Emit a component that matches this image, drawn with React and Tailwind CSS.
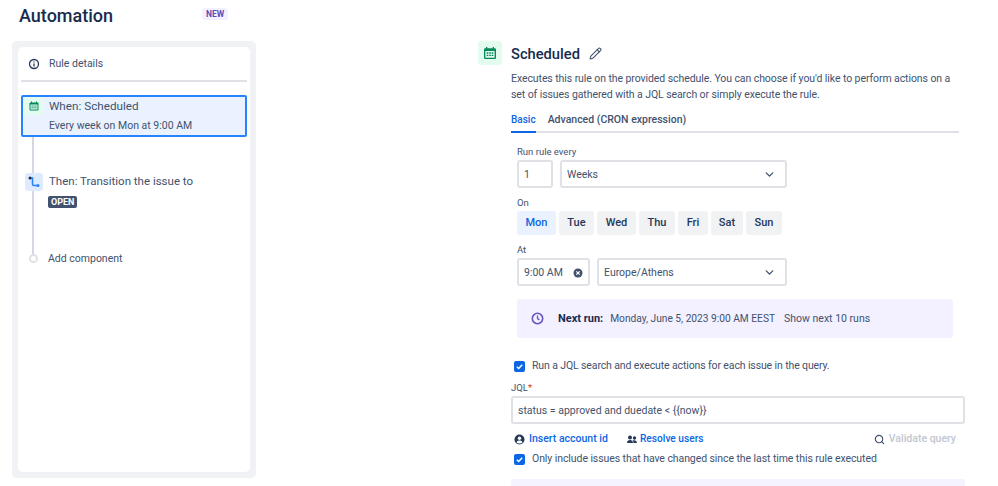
import React from 'react';
import { ChevronDown, Pencil, Search } from 'lucide-react';

const CalendarIcon = ({ size = 16 }) => (
  <svg width={size} height={size} viewBox="0 0 24 24">
    <path d="M6 3h2v2h8V3h2v2h1a2 2 0 0 1 2 2v12a2 2 0 0 1-2 2H5a2 2 0 0 1-2-2V7a2 2 0 0 1 2-2h1V3zM5 9v10h14V9H5z" fill="#00875a" />
    <path d="M7 11h2.5v2H7zM10.75 11h2.5v2h-2.5zM14.5 11H17v2h-2.5zM7 14.5h2.5v2H7zM10.75 14.5h2.5v2h-2.5zM14.5 14.5H17v2h-2.5z" fill="#00875a" />
  </svg>
);

const CheckBox = () => (
  <span className="flex h-[11px] w-[11px] shrink-0 items-center justify-center rounded-[2px] bg-[#0c66e4]">
    <svg width="9" height="9" viewBox="0 0 10 10" fill="none">
      <path d="M2 5.2l2.1 2.1L8 3" stroke="#fff" strokeWidth="1.6" />
    </svg>
  </span>
);

const Field = ({ className, children }) => (
  <div className={`flex h-[28px] items-center rounded-[3px] border-2 border-[#dfe1e6] bg-white px-[5px] pt-[1px] text-[#42526e] ${className}`}>
    {children}
  </div>
);

const days = [
  ['Mon', 'w-[39px]'],
  ['Tue', 'w-[35px]'],
  ['Wed', 'w-[39px]'],
  ['Thu', 'w-[36px]'],
  ['Fri', 'w-[30px]'],
  ['Sat', 'w-[32px]'],
  ['Sun', 'w-[36px]'],
];

const App = () => {
  return (
    <div className="flex h-[486px] w-[998px] overflow-hidden bg-white font-['Roboto',sans-serif] text-[10.5px] text-[#42526e]">
      <div className="ml-[12px] w-[244px] shrink-0">
        <div className="flex h-[41px] items-start">
          <h1 className="ml-[7px] mt-[3px] text-[18px] leading-[26px] font-medium text-[#172b4d]">Automation</h1>
          <span className="ml-[89px] mt-[8px] rounded-[3px] bg-[#f3f0ff] px-[4px] text-[8.5px] leading-[12px] font-bold text-[#5e4db2]">NEW</span>
        </div>
        <div className="h-[437px] rounded-[5px] bg-[#f1f2f5] p-[6px]">
          <div className="h-full rounded-[5px] bg-white px-[3px]">
            <div className="flex h-[35px] items-center border-b-2 border-[#dfe1e6] pl-[7px]">
              <svg width="12" height="12" viewBox="0 0 12 12" fill="none">
                <circle cx="6" cy="6" r="4.5" stroke="#253858" strokeWidth="1.3" />
                <path d="M6 5.4v3M6 3.4v1" stroke="#253858" strokeWidth="1.3" />
              </svg>
              <span className="ml-[9px] pt-[1px]">Rule details</span>
            </div>
            <div className="mt-[13px] h-[42px] rounded-[2px] border-2 border-[#2684ff] bg-[#e9f2fe] pl-[1px]">
              <div className="flex">
                <span className="flex h-[18px] w-[20px] items-center justify-center rounded-[3px] bg-[#e3fcef]">
                  <CalendarIcon size={12} />
                </span>
                <div className="ml-[5px] -mt-[1px]">
                  <div className="text-[11.7px] leading-[20px]">When: Scheduled</div>
                  <div className="mt-[2px] leading-[15px]">Every week on Mon at 9:00 AM</div>
                </div>
              </div>
            </div>
            <div className="relative h-[126px]">
              <span className="absolute left-[11px] top-0 h-[120px] w-[2px] bg-[#d5d8e0]" />
              <span className="absolute left-[4px] top-[36px] flex h-[18px] w-[18px] items-center justify-center rounded-[3px] bg-[#deebff]">
                <svg width="14" height="14" viewBox="0 0 14 14" fill="none">
                  <path d="M3 3h2.500v6c0 1 .5 1.500 1.500 1.500h3" stroke="#2684ff" strokeWidth="1.600" />
                  <circle cx="3" cy="3" r="1.500" fill="#172b4d" />
                  <circle cx="11" cy="10.500" r="1.500" fill="#2684ff" />
                </svg>
              </span>
              <div className="absolute left-[28px] top-[34px]">
                <div className="whitespace-nowrap text-[11.5px] leading-[20px]">Then: Transition the issue to</div>
                <span className="-ml-[1px] mt-[5px] block w-fit rounded-[2px] bg-[#42526e] px-[3px] text-[9px] leading-[12px] font-bold text-white">OPEN</span>
              </div>
              <span className="absolute left-[8px] top-[117px] h-[9px] w-[9px] rounded-full border-2 border-[#dfe1e6] bg-white" />
              <span className="absolute left-[27px] top-[114px] leading-[16px]">Add component</span>
            </div>
          </div>
        </div>
      </div>

      <div className="ml-[222px] w-[487px] shrink-0">
        <div className="mt-[41px] flex">
          <span className="flex h-[24px] w-[24px] items-center justify-center rounded-[3px] bg-[#e3fcef]">
            <CalendarIcon />
          </span>
          <h2 className="ml-[9px] text-[14.7px] leading-[26px] font-medium text-[#172b4d]">Scheduled</h2>
          <Pencil className="ml-[9px] mt-[6px]" size={13} color="#42526e" />
        </div>
        <div className="ml-[33px]">
          <p className="mt-[4px] w-[448px] leading-[16px] tracking-[-0.08px]">
            Executes this rule on the provided schedule. You can choose if you'd like to perform actions on a set of issues gathered with a JQL search or simply execute the rule.
          </p>
          <div className="mt-[7px] flex h-[23px] w-[448px] border-b-2 border-[#dfe1e6] leading-[19px]">
            <span className="-mb-[2px] border-b-2 border-[#0c66e4] text-[10px] font-medium text-[#0c66e4]">Basic</span>
            <span className="ml-[12px] font-medium">Advanced (CRON expression)</span>
          </div>
          <div className="ml-[6px] w-[436px]">
            <label className="mt-[12px] block text-[9.5px] leading-[14px]">Run rule every</label>
            <div className="mt-[1px] flex gap-[7px]">
              <Field className="w-[36px]">1</Field>
              <Field className="w-[227px] justify-between">
                Weeks
                <ChevronDown size={13} className="mr-[4px]" strokeWidth={2.5} />
              </Field>
            </div>
            <label className="mt-[8px] block text-[9.5px] leading-[14px]">On</label>
            <div className="mt-[1px] flex gap-[3px]">
              {days.map(([day, width], i) => (
                <span
                  key={day}
                  className={`flex h-[24px] items-center justify-center rounded-[3px] text-[11px] font-medium ${width} ${i === 0 ? 'bg-[#e9f2fe] text-[#0c66e4]' : 'bg-[#f1f2f4] text-[#253858]'}`}
                >
                  {day}
                </span>
              ))}
            </div>
            <label className="mt-[8px] block text-[9.5px] leading-[14px]">At</label>
            <div className="mt-[1px] flex gap-[7px]">
              <Field className="w-[73px] justify-between">
                9:00 AM
                <svg width="10" height="10" viewBox="0 0 10 10">
                  <circle cx="5" cy="5" r="4.500" fill="#42526e" />
                  <path d="M3.300 3.300l3.400 3.400M6.700 3.300L3.300 6.700" stroke="#fff" strokeWidth="1.200" />
                </svg>
              </Field>
              <Field className="w-[190px] justify-between">
                Europe/Athens
                <ChevronDown size={13} className="mr-[4px]" strokeWidth={2.5} />
              </Field>
            </div>
            <div className="mt-[13px] flex h-[39px] items-center rounded-[3px] bg-[#f3f0ff] pl-[14px]">
              <svg width="13" height="13" viewBox="0 0 13 13" fill="none">
                <circle cx="6.500" cy="6.500" r="5.200" stroke="#6554c0" strokeWidth="1.600" />
                <path d="M6.500 3.600v3l2 1.400" stroke="#6554c0" strokeWidth="1.300" />
              </svg>
              <span className="ml-[14px] pt-[1px] text-[11px] font-bold text-[#172b4d]">Next run:</span>
              <span className="ml-[7px] pt-[1px] text-[10.2px]">Monday, June 5, 2023 9:00 AM EEST</span>
              <span className="ml-[9px] pt-[1px]">Show next 10 runs</span>
            </div>
          </div>
          <div className="mt-[21px] flex h-[14px] items-center pl-[3px]">
            <CheckBox />
            <span className="ml-[7px] tracking-[-0.12px]">Run a JQL search and execute actions for each issue in the query.</span>
          </div>
          <label className="mt-[8px] block text-[9.5px] leading-[14px]">
            JQL<span className="text-[#de350b]">*</span>
          </label>
          <div className="mt-[1px]">
            <Field className="w-[454px]">status = approved and duedate &lt; {'{{now}}'}</Field>
          </div>
          <div className="mt-[8px] flex h-[14px] w-[454px] items-center pl-[3px] font-medium">
            <svg width="11" height="11" viewBox="0 0 11 11">
              <circle cx="5.500" cy="5.500" r="5" fill="#253858" />
              <circle cx="5.500" cy="4.200" r="1.700" fill="#fff" />
              <path d="M2.500 8.500c.5-1.400 1.600-2 3-2s2.500.6 3 2c-1.600 1.300-4.400 1.300-6 0z" fill="#fff" />
            </svg>
            <span className="ml-[4px] text-[#0c66e4]">Insert account id</span>
            <svg className="ml-[18px]" width="12" height="11" viewBox="0 0 12 11" fill="#253858">
              <circle cx="4" cy="3.500" r="2" />
              <circle cx="8.500" cy="4" r="1.700" />
              <path d="M1 9c0-2 1.300-3 3-3s3 1 3 3zM7.500 9c0-1-.3-2-1-2.600 2.400-.8 4.500.4 4.500 2.600z" />
            </svg>
            <span className="ml-[2px] text-[10.2px] text-[#0c66e4]">Resolve users</span>
            <Search className="ml-auto" size={11} color="#42526e" strokeWidth={2.5} />
            <span className="ml-[4px] mr-[9px] text-[#c1c7d0]">Validate query</span>
          </div>
          <div className="mt-[6px] flex h-[14px] items-center pl-[3px]">
            <CheckBox />
            <span className="ml-[7px] tracking-[-0.08px]">Only include issues that have changed since the last time this rule executed</span>
          </div>
          <div className="mt-[13px] h-[20px] w-[454px] rounded-[3px] bg-[#f5f3ff]" />
        </div>
      </div>
    </div>
  );
};

export default App;
